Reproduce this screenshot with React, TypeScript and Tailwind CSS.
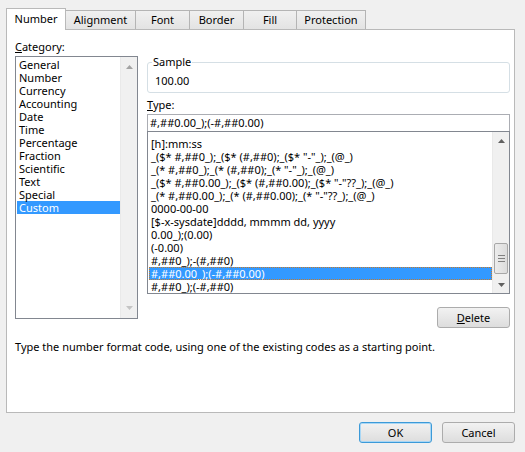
import React from "react";

const categories = [
  "General",
  "Number",
  "Currency",
  "Accounting",
  "Date",
  "Time",
  "Percentage",
  "Fraction",
  "Scientific",
  "Text",
  "Special",
  "Custom",
];

const formats = [
  "[h]:mm:ss",
  '_($* #,##0_);_($* (#,##0);_($* "-"_);_(@_)',
  '_(* #,##0_);_(* (#,##0);_(* "-"_);_(@_)',
  '_($* #,##0.00_);_($* (#,##0.00);_($* "-"??_);_(@_)',
  '_(* #,##0.00_);_(* (#,##0.00);_(* "-"??_);_(@_)',
  "0000-00-00",
  "[$-x-sysdate]dddd, mmmm dd, yyyy",
  "0.00_);(0.00)",
  "(-0.00)",
  "#,##0_);-(#,##0)",
  "#,##0.00_);(-#,##0.00)",
  "#,##0_);(-#,##0)",
];

const tabs = ["Number", "Alignment", "Font", "Border", "Fill", "Protection"];
const tabWidths = ["w-[60px]", "w-[71px]", "w-[55px]", "w-[55px]", "w-[54px]", "w-[70px]"];

function Arrow({ up, color }: { up: boolean; color: string }) {
  return (
    <svg width="7" height="4" viewBox="0 0 7 4">
      {up ? <polygon points="0,4 7,4 3.5,0" fill={color} /> : <polygon points="0,0 7,0 3.5,4" fill={color} />}
    </svg>
  );
}

function Btn({ children, primary, w }: { children: React.ReactNode; primary?: boolean; w: string }) {
  return (
    <div
      className={`${w} h-[21px] flex items-center justify-center rounded-[3px] border ${
        primary ? "border-[#3c9ad8] shadow-[inset_0_0_0_1px_#a9d7f5]" : "border-[#acacac]"
      } bg-gradient-to-b from-[#f2f2f2] to-[#dddddd] text-black`}
    >
      {children}
    </div>
  );
}

export default function App() {
  return (
    <div className="w-[525px] h-[452px] bg-[#f0f0f0] font-['Noto_Sans',sans-serif] text-[11px] text-black leading-[14px] overflow-hidden">
      {/* Tabs */}
      <div className="flex items-end pl-[6px] pt-[7px] h-[29px]">
        {tabs.map((t, i) =>
          i === 0 ? (
            <div
              key={t}
              className={`${tabWidths[i]} h-[22px] relative z-10 -mb-px bg-white border border-b-0 border-[#b9b9b9] flex items-center justify-center pb-[2px]`}
            >
              {t}
            </div>
          ) : (
            <div
              key={t}
              className={`${tabWidths[i]} h-[19px] -ml-px bg-gradient-to-b from-[#f0f0f0] to-[#e3e3e3] border border-b-0 border-[#b4b4b4] flex items-center justify-center`}
            >
              {t}
            </div>
          )
        )}
      </div>

      {/* Panel */}
      <div className="ml-[6px] w-[509px] h-[384px] bg-white border border-[#b9b9b9] flex flex-col pl-[8px] pt-[7px]">
        <div className="flex">
          {/* Left column */}
          <div className="w-[123px] flex flex-col">
            <div className="h-[19px] flex items-center">
              <span>
                <span className="underline">C</span>ategory:
              </span>
            </div>
            <div className="h-[263px] border border-[#828790] flex">
              <div className="flex-1 pt-[1px] pl-[1px]">
                {categories.map((c) => (
                  <div
                    key={c}
                    className={`h-[13px] leading-[13px] flex items-center pl-[2px] ${
                      c === "Custom" ? "bg-[#3399ff] text-white" : ""
                    }`}
                  >
                    {c}
                  </div>
                ))}
              </div>
              <div className="w-[17px] bg-[#f0f0f0] border-l border-[#e9e9e9] flex flex-col justify-between items-center py-[8px]">
                <Arrow up color="#a3a3a3" />
                <Arrow up={false} color="#c4c4c4" />
              </div>
            </div>
          </div>

          {/* Right column */}
          <div className="ml-[9px] w-[363px] flex flex-col">
            <fieldset className="h-[38px] mt-[18px] border border-[#d5dfe5] rounded-[3px] px-[4px]">
              <legend className="px-[1px] leading-[14px]">Sample</legend>
              <div className="pl-[3px] pt-[5px]">100.00</div>
            </fieldset>
            <div className="h-[21px] flex items-end pb-[2px]">
              <span>
                <span className="underline">T</span>ype:
              </span>
            </div>
            <div className="h-[18px] border border-[#abadb3] flex items-center pl-[2px]">
              #,##0.00_);(-#,##0.00)
            </div>
            <div className="h-[163px] -mt-px border border-[#828790] flex">
              <div className="flex-1 pt-[5px] pl-[1px] whitespace-nowrap overflow-hidden">
                {formats.map((f, i) => (
                  <div
                    key={i}
                    className={`h-[13px] leading-[13px] flex items-center pl-[2px] ${
                      i === 10 ? "bg-[#3399ff] text-white outline-1 outline-dotted outline-[#c57a2c] -outline-offset-1" : ""
                    }`}
                  >
                    {f}
                  </div>
                ))}
              </div>
              <div className="w-[17px] bg-[#f0f0f0] border-l border-[#e9e9e9] flex flex-col items-center">
                <div className="h-[17px] flex items-center justify-center">
                  <Arrow up color="#606060" />
                </div>
                <div className="flex-1 w-full flex flex-col justify-end pb-[2px]">
                  <div className="mx-[1px] h-[31px] border border-[#a7a7a7] rounded-[2px] bg-gradient-to-r from-[#ececec] to-[#dcdcdc] flex flex-col items-center justify-center gap-[2px]">
                    <div className="w-[7px] h-px bg-[#808080]" />
                    <div className="w-[7px] h-px bg-[#808080]" />
                    <div className="w-[7px] h-px bg-[#808080]" />
                  </div>
                </div>
                <div className="h-[17px] flex items-center justify-center">
                  <Arrow up={false} color="#606060" />
                </div>
              </div>
            </div>
            <div className="flex justify-end mt-[13px]">
              <Btn w="w-[73px]">
                <span>
                  <span className="underline">D</span>elete
                </span>
              </Btn>
            </div>
          </div>
        </div>
        <div className="mt-[12px]">Type the number format code, using one of the existing codes as a starting point.</div>
      </div>

      {/* Bottom buttons */}
      <div className="flex justify-end gap-[10px] pr-[10px] pt-[9px]">
        <Btn w="w-[73px]" primary>
          OK
        </Btn>
        <Btn w="w-[73px]">Cancel</Btn>
      </div>
    </div>
  );
}
